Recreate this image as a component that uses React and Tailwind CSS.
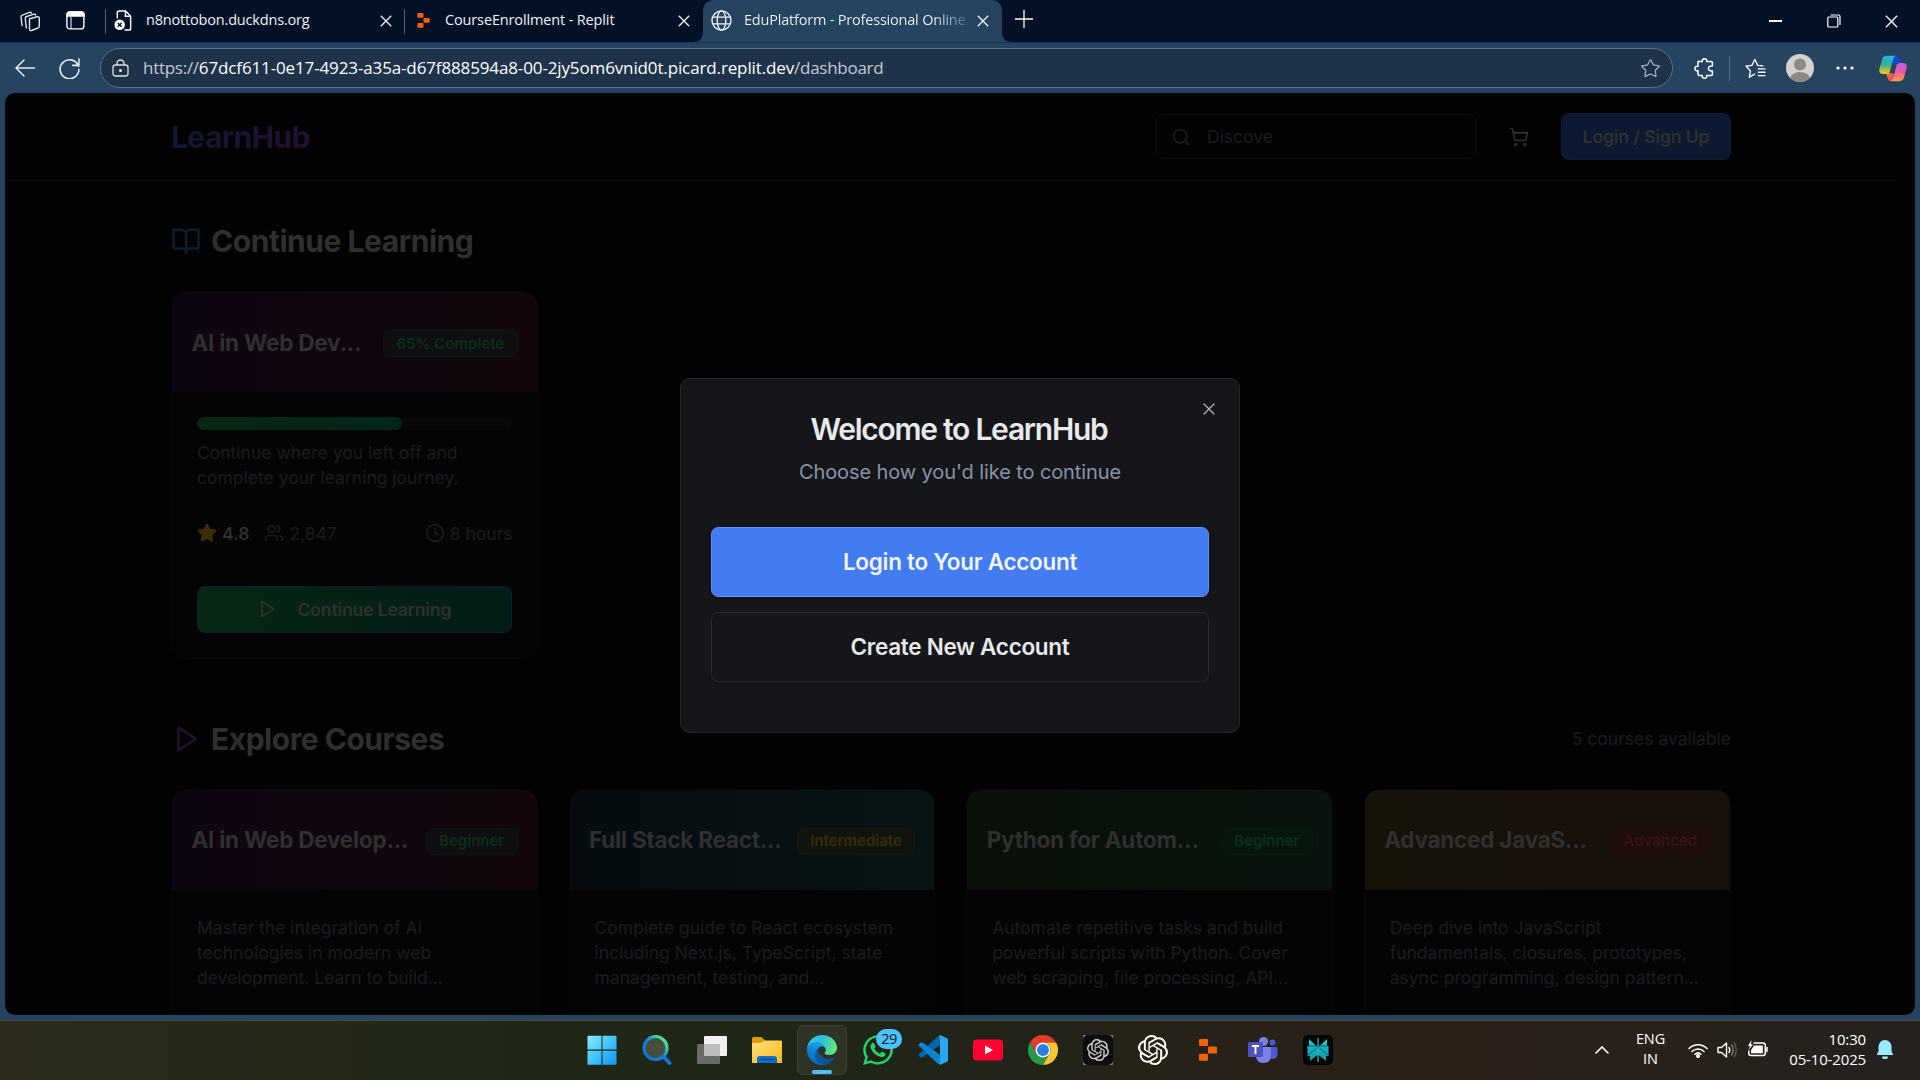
import React from "react";
import {
  BookOpen, Star, Users, Clock, ShoppingCart, Search, X,
} from "lucide-react";
import { SiOpenai } from "react-icons/si";
import { FaWhatsapp } from "react-icons/fa";

const UI = "font-['Open_Sans','Noto_Sans',sans-serif]";

/* ---------- browser chrome ---------- */

function Cross({ className = "size-[12px]", w = 1.3 }) {
  return (
    <svg viewBox="0 0 12 12" className={className} fill="none" stroke="currentColor" strokeWidth={w}>
      <path d="M.8.8l10.4 10.4M11.2.8L.8 11.2" />
    </svg>
  );
}

function ReplitMark({ className }) {
  return (
    <svg viewBox="0 0 18 22" className={className} fill="#f26207">
      <rect x="0" y="0" width="9" height="7" rx="1.2" />
      <rect x="9" y="7.4" width="9" height="7" rx="1.2" />
      <rect x="0" y="14.8" width="9" height="7" rx="1.2" />
    </svg>
  );
}

function PlayOutline({ className }) {
  return (
    <svg viewBox="0 0 24 24" className={className} fill="none" stroke="currentColor" strokeWidth="2" strokeLinecap="round" strokeLinejoin="round">
      <polygon points="6 3 20 12 6 21 6 3" />
    </svg>
  );
}

function TabStrip() {
  return (
    <div className={`flex h-[42px] shrink-0 bg-[#031127] text-[14.500px] text-[#eef2f6] ${UI}`}>
      <div className="flex h-[41px] w-[105px] items-center pl-[19px]">
        <svg viewBox="0 0 22 22" className="size-[22px]" fill="none" stroke="#dfe5ec" strokeWidth="1.4" strokeLinejoin="round" strokeLinecap="round">
          <path d="M10.500 8.800l7.800-2q2-.4 2 1.400v8q0 1.300-1.300 1.800l-6.500 2.500q-2 .6-2-1.200z" />
          <path d="M7.300 18l-1-9.500q-.1-1.500 1.300-2l7.400-2.300q1.400-.3 1.700.8" />
          <path d="M3 15.500l-1-8.300q-.1-1.500 1.300-2.100l7.200-2.700q1.500-.4 2 .7" />
        </svg>
        <svg viewBox="0 0 19 19" className="ml-[25px] size-[19px]" fill="none" stroke="#fff" strokeWidth="1.4">
          <rect x=".9" y=".9" width="17" height="17" rx="3" />
          <path d="M1 3.500Q1 1 3.500 1h12Q18 1 18 3.500V5H1z" fill="#fff" />
          <path d="M5 6v12" strokeWidth="1" />
        </svg>
      </div>
      <div className="mt-[9px] h-[25px] w-px bg-[#56606f]" />
      <div className="flex h-[40px] w-[298px] items-center pl-[7px]">
        <svg viewBox="0 0 20 22" className="size-[21px] shrink-0" fill="none" stroke="#fff" strokeWidth="1.5">
          <path d="M3.500 9V3.200Q3.500 1 5.500 1h6.700l5.300 5.500V19q0 2-2 2H11" />
          <path d="M12 1v5.500h5.500" />
          <circle cx="6" cy="15.500" r="5.500" fill="#fff" stroke="none" />
          <path d="M4 13.500l4 4M8 13.500l-4 4" stroke="#031127" />
        </svg>
        <span className="-mt-px ml-[12px] w-[234px] shrink-0 whitespace-nowrap tracking-[-0.180px]">n8nottobon.duckdns.org</span>
        <Cross className="mt-px size-[12px] shrink-0" />
      </div>
      <div className="mt-[9px] h-[25px] w-px bg-[#56606f]" />
      <div className="flex h-[40px] w-[298px] items-center pl-[12px]">
        <ReplitMark className="h-[15px] w-[13px]" />
        <span className="-mt-px ml-[15px] w-[233px] whitespace-nowrap tracking-[-0.140px]">CourseEnrollment - Replit</span>
        <Cross className="mt-px size-[12px] shrink-0" />
      </div>
      <div className="-ml-[10px] h-[42px] w-[10px] bg-[#26435f] [clip-path:path('M10_32V42H0Q10_42_10_32Z')]" />
      <div className="flex h-[42px] w-[299px] items-center rounded-t-[10px] bg-[#26435f] pl-[8px]">
        <svg viewBox="0 0 22 22" className="-mt-[2px] size-[21px]" fill="none" stroke="#eef3f8" strokeWidth="1.400">
          <circle cx="11" cy="11" r="10" />
          <ellipse cx="11" cy="11" rx="4.500" ry="10" />
          <path d="M2 7.500h18M2 14.500h18" />
        </svg>
        <span className="-mt-[3px] ml-[12px] w-[223px] overflow-hidden whitespace-nowrap bg-linear-to-r from-[#f3f6f9] from-85% to-[#4d657c] bg-clip-text tracking-[-0.200px] text-transparent">EduPlatform - Professional Online</span>
        <Cross className="-mt-px ml-[10px] size-[12px] shrink-0" />
      </div>
      <div className="h-[42px] w-[10px] bg-[#26435f] [clip-path:path('M0_32V42H10Q0_42_0_32Z')]" />
      <svg viewBox="0 0 18 18" className="ml-[3px] mt-[10px] size-[18px]" stroke="#fff" strokeWidth="1.300">
        <path d="M9 0v18M0 9h18" />
      </svg>
      <div className="ml-auto flex h-[42px] items-center pr-[22px]">
        <div className="h-[1.500px] w-[13px] bg-white" />
        <svg viewBox="0 0 14 14" className="ml-[45px] mr-[44px] size-[14px]" fill="none" stroke="#fff" strokeWidth="1.200">
          <rect x=".8" y="3" width="10" height="10" rx="1" />
          <path d="M3.500 1h8q1.500 0 1.500 1.500V11" />
        </svg>
        <Cross className="size-[13px]" />
      </div>
    </div>
  );
}

function Toolbar() {
  return (
    <div className={`flex h-[51px] shrink-0 items-center border-t border-[#1a3350] bg-[#26435f] text-white ${UI}`}>
      <svg viewBox="0 0 20 18" className="ml-[15px] h-[18px] w-[20px]" fill="none" stroke="#e6ebf0" strokeWidth="1.500" strokeLinecap="round" strokeLinejoin="round">
        <path d="M19.500 9H1M9 1L1 9l8 8" />
      </svg>
      <svg viewBox="0 0 20 20" className="ml-[24px] size-[21px]" fill="none" stroke="#e6ebf0" strokeWidth="1.500" strokeLinecap="round" strokeLinejoin="round">
        <path d="M18.600 8A9 9 0 1 0 19 11M19 1v6h-6" />
      </svg>
      <div className="ml-[20px] flex h-[40px] w-[1573px] items-center rounded-full border border-[#5d6e80] bg-[#1e334a] pl-[11px] pr-[11px]">
        <svg viewBox="0 0 17 18" className="h-[18px] w-[17px]" fill="none" stroke="#dde3e9" strokeWidth="1.300">
          <rect x="1" y="6" width="15" height="11" rx="2.500" />
          <path d="M5 6V4.500a3.500 3.500 0 0 1 7 0V6" />
          <circle cx="8.500" cy="11.500" r=".9" fill="#dde3e9" />
        </svg>
        <span className="-mt-px ml-[14px] whitespace-nowrap text-[17px] tracking-[-0.270px] text-[#c3cad2]">
          https://<span className="tracking-[-0.130px] text-white">67dcf611-0e17-4923-a35a-d67f888594a8-00-2jy5om6vnid0t.picard.replit.dev</span>/dashboard
        </span>
        <Star className="ml-auto size-[21px] text-[#a7b3bf]" strokeWidth={1.4} />
      </div>
      <svg viewBox="0 0 20 21" className="ml-[21px] h-[21px] w-[20px]" fill="none" stroke="#fff" strokeWidth="1.500" strokeLinejoin="round">
        <path d="M4 3.500h4.300q-.3-2.700 2.200-2.700t2.200 2.700H17q1.400 0 1.400 1.400V8q-4-.2-4 2.500t4 2.500v3.200q0 1.400-1.400 1.400h-4.300q.3 2.700-2.200 2.700t-2.200-2.700H5.400Q4 17.600 4 16.200V12.800q-3 .2-3-2.300t3-2.300z" />
      </svg>
      <div className="ml-[15px] h-[25px] w-px bg-[#56708a]" />
      <svg viewBox="0 0 22 21" className="ml-[15px] h-[20px] w-[21px]" fill="none" stroke="#fff" strokeWidth="1.400" strokeLinejoin="round" strokeLinecap="round">
        <path d="M10 17l-5.500 3.200 1.200-6.600L1 8.500l6.300-.8L10.300 1.500l3 6.200 5.500.5M14 11.500h7M14 15h7M14 18.500h7" />
      </svg>
      <svg viewBox="0 0 28 28" className="ml-[20px] size-[28px]">
        <defs><clipPath id="av"><circle cx="14" cy="14" r="14" /></clipPath></defs>
        <g clipPath="url(#av)"><path fill="#d3d1ce" d="M0 0h28v28H0z" /><circle cx="14" cy="10.500" r="6" fill="#8d8985" /><ellipse cx="14" cy="25" rx="10" ry="7" fill="#8d8985" /></g>
      </svg>
      <svg viewBox="0 0 18 4" className="ml-[22px] h-[4px] w-[18px]" fill="#fff">
        <circle cx="2" cy="2" r="1.600" /><circle cx="9" cy="2" r="1.600" /><circle cx="16" cy="2" r="1.600" />
      </svg>
      <svg viewBox="0 0 28 27" className="ml-[25px] h-[27px] w-[28px]">
        <defs>
          <linearGradient id="cpa" x1="0" y1="0" x2="0" y2="1"><stop offset="0" stopColor="#19b5f2" /><stop offset=".5" stopColor="#3fae8a" /><stop offset="1" stopColor="#f4d016" /></linearGradient>
          <linearGradient id="cpb" x1="0" y1="0" x2="0" y2="1"><stop offset="0" stopColor="#b45cf0" /><stop offset=".5" stopColor="#ef5a9a" /><stop offset="1" stopColor="#ffa14a" /></linearGradient>
          <linearGradient id="cpc" x1="0" y1="0" x2="1" y2="1"><stop offset="0" stopColor="#ff7a3c" /><stop offset="1" stopColor="#e8384f" /></linearGradient>
        </defs>
        <path d="M12 1h5q2.500 0 3.300 2.500L21.500 8h-4q-2 0-2.700 2L12 7z" fill="#1048d8" />
        <path d="M7 18h6l3 2-2 6h-2q-2.500 0-3.200-2.500z" fill="url(#cpc)" />
        <path d="M8 .8h9.500q-2.500.3-3.200 3L11 16q-.8 3-3.600 3H4Q-.5 19 .4 14L3 4.500Q4.200.8 8 .8z" fill="url(#cpa)" />
        <path d="M20 26.200H11q2.500-.3 3.200-3L17.300 11q.8-3 3.600-3H24q4.500 0 3.600 5L25 22.500q-1.200 3.700-5 3.700z" fill="url(#cpb)" />
      </svg>
    </div>
  );
}

/* ---------- page content, as it appears beneath the dialog scrim ---------- */

const badgeTones = {
  green: "border-[#0a1a12] bg-[#0f0e10] text-[#0d2f18]",
  yellow: "border-[#1d180a] bg-[#11140e] text-[#382c05]",
  emerald: "border-[#081b0f] bg-[#06160c] text-[#0d2f1a]",
  red: "border-[#210c0b] bg-[#1e0d0b] text-[#391414]",
};

function CardHead({ title, badge, tone, grad }) {
  return (
    <div className={`flex h-[100px] shrink-0 items-center justify-between bg-linear-to-r pl-[19.500px] pr-[19px] ${grad}`}>
      <h3 className="whitespace-nowrap text-[22.500px] font-bold leading-[35px] tracking-[-0.230px] text-[#2f2f30]">{title}</h3>
      <span className={`mt-[3px] shrink-0 rounded-[7.500px] border px-[12.500px] py-[2.500px] text-[15px] font-semibold leading-[20px] ${badgeTones[tone]}`}>{badge}</span>
    </div>
  );
}

function ContinueCard() {
  return (
    <div className="w-[366.750px] overflow-hidden rounded-[15px] border border-[#070708] bg-[#040404]">
      <CardHead title="AI in Web Dev..." badge="65% Complete" tone="green" grad="from-[#0d0512] to-[#13070d] via-[#11060e]" />
      <div className="p-[25px]">
        <div className="h-[12.500px] overflow-hidden rounded-full bg-[#08080a]">
          <div className="h-full w-[65%] rounded-full bg-linear-to-r from-[#082712] to-[#03241b]" />
        </div>
        <p className="mt-[10px] text-[17.500px] leading-[25px] text-[#1b1c20]">Continue where you left off and complete your learning journey.</p>
        <div className="-mr-[0.750px] mt-[19px] flex items-center border-t border-[#070708] pt-[11px] text-[17.500px] leading-[25px] text-[#1b1c20]">
          <Star className="size-[20px] fill-[#3c2e03] text-[#3c2e03]" />
          <span className="ml-[5px] font-semibold text-[#2f2f30]">4.8</span>
          <Users className="ml-[15px] size-[20px]" />
          <span className="ml-[5px]">2,847</span>
          <Clock className="ml-auto size-[20px]" />
          <span className="ml-[5px]">8 hours</span>
        </div>
        <div className="mt-[40px] flex h-[47px] items-center justify-center rounded-[7.500px] border border-[#101c33] bg-linear-to-r from-[#082712] to-[#021c16] text-[17.500px] font-semibold tracking-[-0.120px] text-[#303031]">
          <PlayOutline className="-ml-px mr-[21px] size-[20px]" />
          <span className="mt-[2px]">Continue Learning</span>
        </div>
      </div>
    </div>
  );
}

const courses = [
  { title: "AI in Web Develop...", badge: "Beginner", tone: "green", grad: "from-[#0d0512] to-[#13070d] via-[#11060e]", lines: ["Master the integration of AI", "technologies in modern web", "development. Learn to build..."] },
  { title: "Full Stack React...", badge: "Intermediate", tone: "yellow", grad: "from-[#060c10] to-[#071415]", lines: ["Complete guide to React ecosystem", "including Next.js, TypeScript, state", "management, testing, and..."] },
  { title: "Python for Autom...", badge: "Beginner", tone: "emerald", grad: "from-[#081008] to-[#09130d]", lines: ["Automate repetitive tasks and build", "powerful scripts with Python. Cover", "web scraping, file processing, API..."] },
  { title: "Advanced JavaS...", badge: "Advanced", tone: "red", grad: "from-[#151208] to-[#19100c]", lines: ["Deep dive into JavaScript", "fundamentals, closures, prototypes,", "async programming, design pattern..."] },
];

function CourseCard({ title, badge, tone, grad, lines }) {
  return (
    <div className="h-[480px] overflow-hidden rounded-[15px] border border-[#070708] bg-[#040404]">
      <CardHead title={title} badge={badge} tone={tone} grad={grad} />
      <div className="p-[25px]">
        <div className="whitespace-nowrap text-[17.500px] leading-[25px] text-[#1b1c20]">
          {lines.map((l) => <p key={l}>{l}</p>)}
        </div>
        <div className="mt-[19px] border-t border-[#070708]" />
      </div>
    </div>
  );
}

function Page() {
  return (
    <div className="relative mx-[5px] h-[922px] shrink-0 overflow-hidden rounded-[10px] bg-[#020202] font-['Inter',sans-serif]">
      <div className="w-[1891px]">
        <header className="flex h-[88px] items-center border-b border-[#070708] pl-[166px] pr-[165px]">
          <div className="bg-linear-to-r from-[#0f1733] to-[#22102f] bg-clip-text text-[30px] font-bold leading-[40px] tracking-[-0.600px] text-transparent">LearnHub</div>
          <div className="ml-auto flex h-[45px] w-[320px] items-center rounded-[7.500px] border border-[#0e0f11] pl-[14px] text-[17.500px] text-[#1b1c20]">
            <Search className="size-[20px]" />
            <span className="ml-[16px] mt-px">Discove</span>
          </div>
          <div className="mx-[20px] flex size-[45px] items-center justify-center text-[#2f2f30]">
            <ShoppingCart className="size-[20px]" />
          </div>
          <div className="flex h-[47px] w-[170px] items-center justify-center rounded-[7.500px] border border-[#111c34] bg-[#0d1831] pt-px text-[17.500px] font-semibold tracking-[-0.080px] text-[#303031]">Login / Sign Up</div>
        </header>
        <main className="w-[1725.500px] pl-[166px] pt-[40px]">
          <div className="mb-[30px] flex h-[40px] items-center text-[30px] font-bold tracking-[-0.460px] text-[#2f2f30]">
            <BookOpen className="mr-[10px] size-[30px] text-[#0f1c31]" />
            Continue Learning
          </div>
          <ContinueCard />
          <div className="-mr-[0.500px] mb-[30px] mt-[60px] flex h-[40px] items-center text-[30px] font-bold tracking-[-0.480px] text-[#2f2f30]">
            <PlayOutline className="mr-[10px] size-[30px] text-[#22112f]" />
            <span className="mt-[2px]">Explore Courses</span>
            <span className="ml-auto mt-[2px] text-[17.500px] font-normal tracking-normal text-[#1b1c20]">5 courses available</span>
          </div>
          <div className="grid grid-cols-4 gap-[30.750px]">
            {courses.map((c) => <CourseCard key={c.title} {...c} />)}
          </div>
        </main>
      </div>
      <div className="absolute left-[675px] top-[285px] flex h-[355px] w-[560px] flex-col rounded-[10px] border border-[#272930] bg-[#15161a] px-[30px] pt-[30px] text-center">
        <X className="absolute right-[20px] top-[20px] size-[20px] text-[#b4b5b8]" strokeWidth={1.500} />
        <h2 className="-ml-[2px] text-[30px] font-semibold leading-[40px] tracking-[-1.260px] text-[#e8e9eb]">Welcome to LearnHub</h2>
        <p className="mt-[8px] text-[20px] leading-[30px] tracking-[-0.100px] text-[#8a92a8]">Choose how you'd like to continue</p>
        <button className="mt-[40px] h-[70px] shrink-0 rounded-[7.500px] border border-[#6593f2] bg-[#437bf0] text-[22.500px] font-semibold tracking-[-0.290px] text-[#f0f3fa]">Login to Your Account</button>
        <button className="mt-[15px] h-[70px] shrink-0 rounded-[7.500px] border border-[#2a2b2f] text-[22.500px] font-semibold tracking-[-0.290px] text-[#e8e9eb]">Create New Account</button>
      </div>
    </div>
  );
}

/* ---------- taskbar ---------- */

function WindowsIcon() {
  return (
    <svg viewBox="0 0 30 30" className="size-[30px]">
      <defs><linearGradient id="win" gradientUnits="userSpaceOnUse" x1="0" y1="0" x2="30" y2="30"><stop stopColor="#84f3ff" /><stop offset=".5" stopColor="#45c3fb" /><stop offset="1" stopColor="#0c92f7" /></linearGradient></defs>
      <path fill="url(#win)" d="M1.500.8h13v13.600h-14V1.800q0-1 1-1zM15.500.8h13q1 0 1 1v12.600h-14zM.5 15.700h14v14h-13q-1 0-1-1zM15.500 15.700h14v13q0 1-1 1h-13z" />
    </svg>
  );
}

function SearchIcon() {
  return (
    <svg viewBox="0 0 30 30" className="size-[30px]" fill="none">
      <defs><linearGradient id="se" x1="1" y1="0" x2="0" y2="1"><stop stopColor="#7ff07a" /><stop offset=".25" stopColor="#3fc9a0" /><stop offset=".5" stopColor="#1b7fd6" /><stop offset="1" stopColor="#0b6fd2" /></linearGradient></defs>
      <path d="M21.500 21.500l6 6.500" stroke="#0f74d8" strokeWidth="4" strokeLinecap="round" />
      <circle cx="13.500" cy="13" r="11.500" fill="#454d3c" stroke="url(#se)" strokeWidth="3.200" />
    </svg>
  );
}

function TaskViewIcon() {
  return (
    <svg viewBox="0 0 30 30" className="size-[30px]">
      <rect x="0" y="9" width="23" height="20" rx="1" fill="#6a6a6a" />
      <rect x="7" y="1" width="23" height="20" rx="1" fill="#f0f0f0" />
      <path d="M7 9h16v12H8q-1 0-1-1z" fill="#bdbdbd" />
    </svg>
  );
}

function ExplorerIcon() {
  return (
    <svg viewBox="0 0 30 30" className="size-[30px]">
      <defs><linearGradient id="fo" x1="0" y1="0" x2="1" y2="1"><stop stopColor="#ffe07a" /><stop offset="1" stopColor="#fbb91c" /></linearGradient></defs>
      <path d="M0 3.500Q0 2 1.500 2h8l3.500 3.500V12H0z" fill="#dd9a08" />
      <path d="M0 8h9l3.500-2.500H29q1 0 1 1V28H0z" fill="url(#fo)" />
      <path d="M5 28v-4q0-3 3-3h14q3 0 3 3v4z" fill="#0f6fc6" /><path d="M8.500 24.500h13" stroke="#084a91" strokeWidth="1.300" />
    </svg>
  );
}

function EdgeIcon() {
  return (
    <svg viewBox="0 0 256 256" className="size-[30px]">
      <defs>
        <linearGradient id="ea" x1=".2" y1=".6" x2="1" y2=".6"><stop stopColor="#0c59a4" /><stop offset="1" stopColor="#114a8b" /></linearGradient>
        <linearGradient id="eb" x1=".7" y1=".2" x2=".4" y2="1"><stop stopColor="#1b9de2" /><stop offset=".6" stopColor="#0a7bd0" /><stop offset="1" stopColor="#0669bc" /></linearGradient>
        <linearGradient id="ec" x1="0" y1=".4" x2="1" y2=".6"><stop stopColor="#35c1f1" /><stop offset=".5" stopColor="#2fc2d2" /><stop offset="1" stopColor="#66eb6e" /></linearGradient>
      </defs>
      <path d="M231 190.500c-3.400 1.800-6.900 3.400-10.500 4.700a101.900 101.900 0 0 1-35.900 6.500c-47.300 0-88.500-32.500-88.500-74.300a31.500 31.500 0 0 1 16.400-27.300C69.700 101.900 58.700 146.500 58.700 172.600c0 73.900 68.100 81.400 82.800 81.400 7.900 0 19.800-2.300 27-4.600l1.300-.4a128.300 128.300 0 0 0 66.600-52.800 4 4 0 0 0-5.400-5.700z" fill="url(#ea)" />
      <path d="M105.700 241.400A79.200 79.200 0 0 1 83 220.100a80.700 80.700 0 0 1 29.500-120c3.200-1.500 8.500-4.100 15.600-4a32.400 32.400 0 0 1 25.700 13 31.900 31.900 0 0 1 6.300 18.700c0-.2 24.500-79.600-80-79.600C36.200 48.200.1 89.900.1 126.500a130 130 0 0 0 12.100 56A128 128 0 0 0 168.600 249.400a75.500 75.500 0 0 1-62.800-8z" fill="url(#eb)" />
      <path d="M152.300 148.900c-.8 1-3.300 2.500-3.300 5.700 0 2.600 1.700 5.100 4.700 7.200 14.400 10 41.500 8.700 41.600 8.700a59.600 59.600 0 0 0 30.300-8.400 61.400 61.400 0 0 0 30.400-52.800c.3-22.400-8-37.300-11.300-43.900C223.500 23.900 177.700 0 128 0A128 128 0 0 0 0 126.200C.5 89.700 36.800 60.200 80 60.200c3.500 0 23.500.3 42 10a72.600 72.600 0 0 1 30.900 29.300c6.100 10.600 7.200 24.100 7.200 29.500s-2.700 13.300-7.800 19.900z" fill="url(#ec)" />
    </svg>
  );
}

function VSCodeIcon() {
  return (
    <svg viewBox="0 0 30 30" className="size-[30px]">
      <path d="M1 19l18-17 4-1.500v9L4.500 22.500q-.8.6-1.600 0L.8 20.700Q0 20 1 19z" fill="#0065a9" />
      <path d="M1 11l18 17 4 1.500v-9L4.500 7.500q-.8-.6-1.600 0L.8 9.300Q0 10 1 11z" fill="#0a84cf" />
      <path d="M22.500.2L29 3.200q1 .5 1 1.500v20.600q0 1-1 1.500l-6.500 3-2.500-1q2 0 2-2V3.200q0-2-2-2z" fill="#29a8ee" />
    </svg>
  );
}

function ChromeIcon() {
  return (
    <svg viewBox="0 0 30 30" className="size-[30px]">
      <path d="M2 7.500A15 15 0 0 1 28 7.500H15v7.500l-6.500 3.700z" fill="#e33b2e" />
      <path d="M2 7.500A15 15 0 0 0 15 30l6.500-11.300a7.500 7.500 0 0 1-13 0z" fill="#259a4b" />
      <path d="M28 7.500A15 15 0 0 1 15 30l6.500-11.300A7.500 7.500 0 0 0 21.500 11 7.500 7.500 0 0 0 15 7.500z" fill="#fcc62c" />
      <circle cx="15" cy="15" r="7.500" fill="#fff" /><circle cx="15" cy="15" r="6" fill="#2b7de9" />
    </svg>
  );
}

function TeamsIcon() {
  return (
    <svg viewBox="0 0 30 30" className="size-[30px]">
      <circle cx="24.500" cy="7.500" r="3" fill="#5059c9" /><circle cx="15.500" cy="6.500" r="4.500" fill="#7b83eb" />
      <path d="M20 12h8q1.500 0 1.500 1.500V19q0 5-5 5-3 0-4.500-2z" fill="#5059c9" />
      <path d="M9 12h12.500q1.500 0 1.500 1.500V20q0 8-7.500 8T8 20v-7z" fill="#7b83eb" />
      <rect x="0" y="7" width="15" height="15" rx="1.500" fill="#4b53bc" />
      <path d="M4 11h7M7.500 11v8" stroke="#fff" strokeWidth="1.900" />
    </svg>
  );
}

function PerplexityIcon() {
  return (
    <svg viewBox="0 0 30 30" className="size-[30px]">
      <defs><linearGradient id="pp" x1="0" y1="0" x2="0" y2="1"><stop stopColor="#25c5d4" /><stop offset="1" stopColor="#0f95a3" /></linearGradient></defs>
      <rect width="30" height="30" rx="5" fill="#030505" />
      <path d="M6 4l8.500 8h1L24 4v7h1.500v10H23v5l-7.500-6h-1L7 26v-5H4.500V11H6z" fill="url(#pp)" />
      <path d="M15 12L5 20M15 12l10 8M6 11h18" stroke="#055861" strokeWidth=".9" />
      <path d="M15 3v24" stroke="#1fb8c6" strokeWidth="1.300" />
    </svg>
  );
}

function Taskbar() {
  return (
    <div className={`flex h-[60px] shrink-0 items-center border-t border-[#4c4a3c] bg-linear-to-r from-[#2c2b1b] via-[#1e2716] via-30% to-[#24211e] text-white ${UI}`}>
      <div className="flex h-full w-full items-center bg-linear-to-r from-transparent from-45% via-[#2b2018] via-75% to-[#24211e] pb-[2px]">
        <div className="ml-[587px] flex shrink-0 items-center gap-[25px]">
          <WindowsIcon />
          <SearchIcon />
          <TaskViewIcon />
          <ExplorerIcon />
          <div className="relative -mx-[10px] flex h-[50px] w-[50px] items-center justify-center rounded-[6px] border border-[#3c402f] bg-[#2f3325]">
            <EdgeIcon />
            <div className="absolute bottom-0 left-[14px] h-[4px] w-[20px] rounded-full bg-[#4cc2ff]" />
          </div>
          <div className="relative ml-px w-[30px]">
            <FaWhatsapp className="-m-[2px] size-[34px] text-[#25d366]" />
            <div className="absolute -top-[6px] left-[13px] flex h-[20px] w-[26px] items-center justify-center rounded-full bg-[#4cc2ff] text-[14.500px] tracking-[-0.500px] text-[#06202e]">29</div>
          </div>
          <VSCodeIcon />
          <svg viewBox="0 0 30 30" className="size-[30px]"><rect y="4.500" width="30" height="21" rx="4" fill="#ff0033" /><path d="M12 10.500v9l8-4.500z" fill="#fff" /></svg>
          <ChromeIcon />
          <div className="flex size-[30px] items-center justify-center bg-[#7d7d7d]">
            <div className="flex size-[30px] items-center justify-center rounded-[5px] bg-[#0d0d0d]"><SiOpenai className="size-[22px] text-[#cfcfcf]" /></div>
          </div>
          <SiOpenai className="size-[30px]" />
          <div className="flex size-[30px] items-center justify-center"><ReplitMark className="h-[22px] w-[18px]" /></div>
          <TeamsIcon />
          <PerplexityIcon />
        </div>
        <svg viewBox="0 0 14 8" className="ml-[262px] h-[8px] w-[14px] shrink-0" fill="none" stroke="#fff" strokeWidth="1.600" strokeLinecap="round"><path d="M1 7l6-6 6 6" /></svg>
        <div className="-mt-px ml-[25px] w-[33px] shrink-0 whitespace-nowrap text-center text-[14.500px] leading-[20px] tracking-[-0.100px]">ENG<br />IN</div>
        <svg viewBox="0 0 20 16" className="ml-[21px] h-[16px] w-[20px] shrink-0" fill="none" stroke="#fff" strokeWidth="1.500" strokeLinecap="round">
          <path d="M1 6.500a12.500 12.500 0 0 1 18 0M4 9.500a8.500 8.500 0 0 1 12 0M7 12.200a4.500 4.500 0 0 1 6 0" /><circle cx="10" cy="14" r="1.300" fill="#fff" />
        </svg>
        <svg viewBox="0 0 20 18" className="ml-[9px] h-[18px] w-[20px] shrink-0" fill="none" stroke="#fff" strokeWidth="1.400" strokeLinecap="round" strokeLinejoin="round">
          <path d="M1 6.500h3.500L9.500 2v14l-5-4.500H1z" /><path d="M12 6.500q1.700 2.500 0 5" /><path d="M14.500 4q3.500 5 0 10" stroke="#7b7672" /><path d="M17 2q4.500 7 0 14" stroke="#5b5653" />
        </svg>
        <svg viewBox="0 0 21 17" className="-mt-[2px] ml-[10px] h-[17px] w-[21px] shrink-0" fill="none" stroke="#fff" strokeWidth="1.500">
          <path d="M6.500 3h9.500q2.300 0 2.300 2.300v7.900q0 2.300-2.300 2.300H4Q1.800 15.500 1.800 13.500v-3" /><path d="M20 7.500v4" strokeLinecap="round" />
          <path d="M7 5.500h8.800v7.700H4v-3z" fill="#fff" stroke="none" /><path d="M4.500 0L1 6h2L1.500 10 6 4.500H4z" fill="#fff" stroke="none" />
        </svg>
        <div className="-mt-[2px] ml-[18px] w-[80px] shrink-0 whitespace-nowrap text-right text-[15px] leading-[20px] tracking-[-0.150px]">10:30<br />05-10-2025</div>
        <svg viewBox="0 0 16 19" className="ml-[11px] h-[19px] w-[16px] shrink-0" fill="#99ebff"><path d="M8 0a6.500 6.500 0 0 1 6.500 6.500V11l1.500 3.500V15H0v-.5L1.500 11V6.500A6.500 6.500 0 0 1 8 0zM5 16.500h6a3 3 0 0 1-6 0z" /></svg>
      </div>
    </div>
  );
}

export default function App() {
  return (
    <div className="flex h-[1080px] w-[1920px] flex-col overflow-hidden bg-[#26435f]">
      <TabStrip />
      <Toolbar />
      <Page />
      <div className="h-[5px] shrink-0" />
      <Taskbar />
    </div>
  );
}
